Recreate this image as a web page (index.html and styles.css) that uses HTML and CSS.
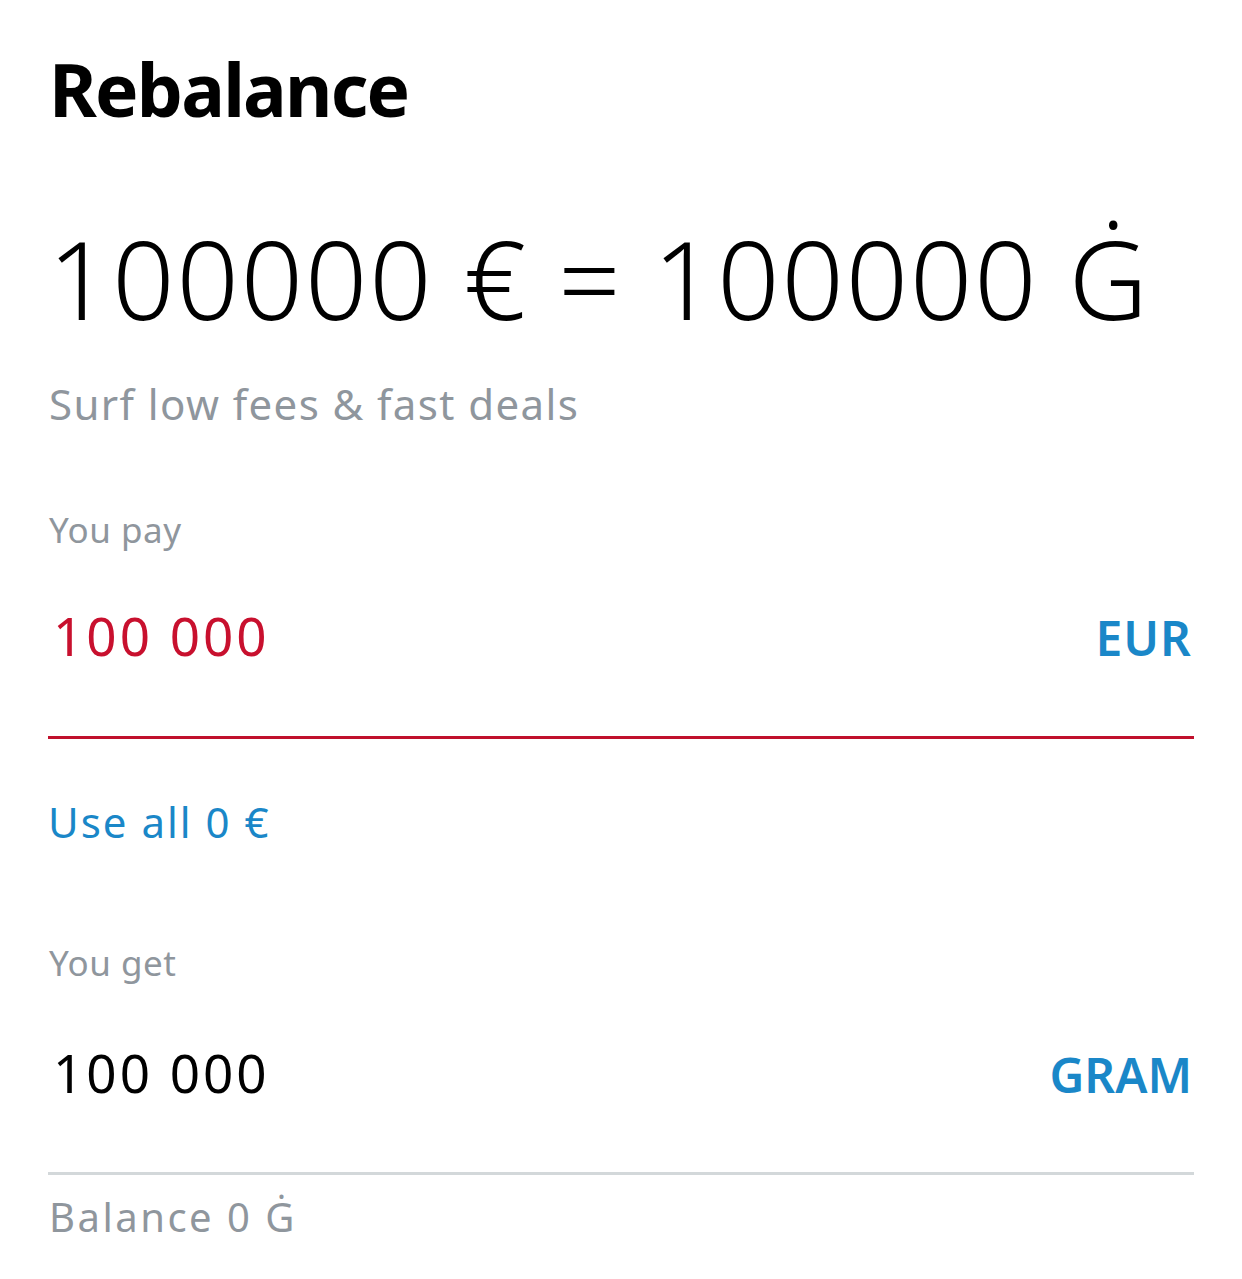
FILE: index.html
```html
<!DOCTYPE html>
<html lang="en">
<head>
<meta charset="utf-8">
<title>Rebalance</title>
<link rel="stylesheet" href="styles.css">
</head>
<body>
<main class="page">
  <h1 class="title">Rebalance</h1>
  <div class="rate">100000 € = 100000 Ġ</div>
  <p class="subtitle">Surf low fees &amp; fast deals</p>

  <div class="label label-pay">You pay</div>
  <div class="field field-error">
    <span class="amount amount-error">100 000</span>
    <span class="currency">EUR</span>
  </div>
  <a class="use-all">Use all 0 €</a>

  <div class="label label-get">You get</div>
  <div class="field field-get">
    <span class="amount">100 000</span>
    <span class="currency">GRAM</span>
  </div>
  <div class="balance">Balance 0 Ġ</div>
</main>
</body>
</html>
```

FILE: styles.css
```css
html, body {
  margin: 0;
  padding: 0;
  background: #ffffff;
}

body {
  font-family: "Noto Sans", "Open Sans", sans-serif;
  color: #000000;
}

.page {
  display: flex;
  flex-direction: column;
  align-items: flex-start;
  padding: 0 48px;
}

.title {
  margin: 52px 0 0 1px;
  font-size: 73px;
  line-height: 1;
  font-weight: 700;
  letter-spacing: -1.8px;
}

.rate {
  margin-top: 98px;
  margin-left: 0;
  font-size: 109px;
  line-height: 1;
  font-weight: 300;
  letter-spacing: 2px;
}

.subtitle {
  margin: 51px 0 0 1px;
  font-size: 42px;
  line-height: 1;
  color: #8f969d;
  letter-spacing: 1.4px;
}

.label {
  font-size: 35px;
  line-height: 1;
  color: #8f969d;
  letter-spacing: 0.5px;
  margin-left: 1px;
}

.label-pay {
  margin-top: 87px;
}

.label-get {
  margin-top: 102px;
}

.field {
  align-self: stretch;
  display: flex;
  justify-content: space-between;
  align-items: baseline;
  margin-top: 62px;
  padding: 0 2px 74px 5px;
  border-bottom: 3px solid #d3d8da;
}

.field-get {
  margin-top: 66px;
  padding-bottom: 73px;
}

.field-error {
  border-bottom-color: #c0102c;
}

.amount {
  font-size: 53px;
  line-height: 1;
  font-weight: 400;
  color: #000000;
  letter-spacing: 3px;
}

.amount-error {
  color: #c8102e;
}

.currency {
  font-size: 48px;
  line-height: 1;
  font-weight: 600;
  color: #1a87c8;
  letter-spacing: 1px;
}

.field-get .currency {
  letter-spacing: 0;
}

.use-all {
  margin-top: 62px;
  margin-left: 0;
  font-size: 42px;
  line-height: 1;
  color: #1a87c8;
  letter-spacing: 2px;
}

.balance {
  margin-top: 22px;
  margin-left: 1px;
  font-size: 40px;
  line-height: 1;
  color: #8f969d;
  letter-spacing: 2.5px;
}
```
